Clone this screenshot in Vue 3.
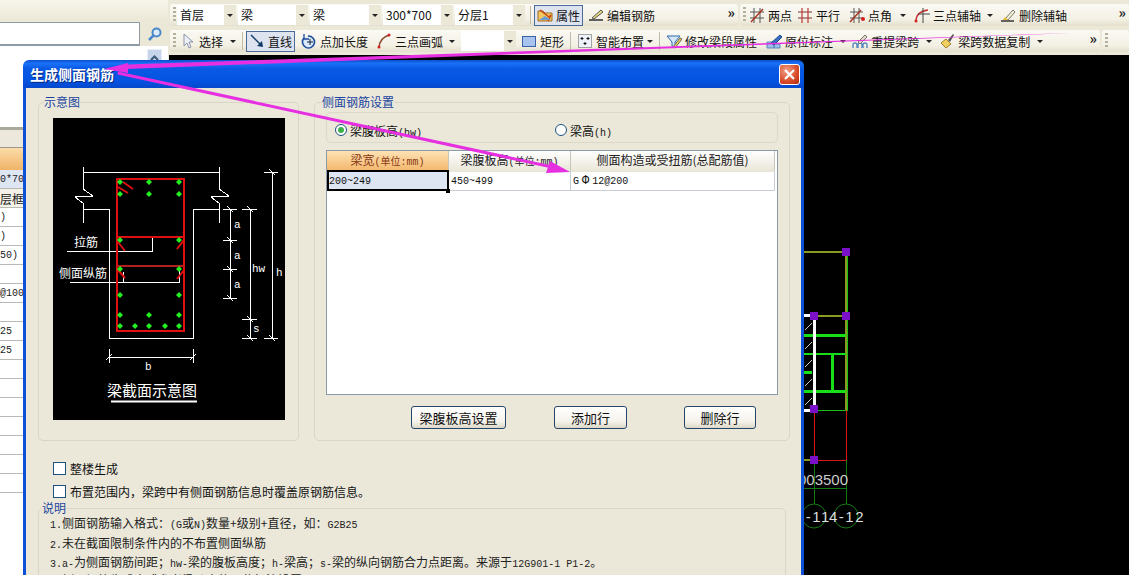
<script setup>
const icons = {
  select: '<path d="M4 1v12l3-3 2 5 2-1-2-5h4z" fill="#eef0f8" stroke="#8a94a8"/>',
  attr: '<path d="M1 4h5l2 2h7v8H1z" fill="#f4c860" stroke="#a06a20"/><path d="M3 3l9 7 2-2-3 6" fill="none" stroke="#c84818" stroke-width="1.5"/><path d="M2 13l6-4 6 4z" fill="#6a9ad0"/>',
  edit: '<path d="M1 13h14" stroke="#222" stroke-width="1.4"/><path d="M4 11l9-8 2 2-9 7z" fill="#e8d880" stroke="#555"/>',
  two: '<path d="M1 5h14M1 11h14M5 1v15M11 1v15" stroke="#555" fill="none"/><path d="M2 15L14 2" stroke="#a83020" stroke-width="1.4"/>',
  para: '<path d="M1 5h14M1 11h14" stroke="#7a3030" fill="none" stroke-width="1.2"/><path d="M5 1v15M11 1v15" stroke="#c03838" fill="none" stroke-width="1.2"/>',
  angle: '<path d="M1 5h13M1 11h13M5 1v15M10 1v15" stroke="#555" fill="none"/><path d="M1 15L12 3" stroke="#a83020" stroke-width="1.4"/><circle cx="14" cy="12" r="2" fill="#d82020"/>',
  arc3: '<path d="M2 14C2 7 6 4 14 3" stroke="#c83030" fill="none" stroke-width="1.3"/><path d="M9 1v15M4 7h12" stroke="#444" fill="none"/><circle cx="2" cy="14" r="1.5" fill="#d82020"/>',
  del: '<path d="M1 14h13" stroke="#333" stroke-width="1.5"/><path d="M5 12l8-9 2 2-7 8z" fill="#f4f0d0" stroke="#777"/><path d="M3 13l2-3 3 3z" fill="#e8b830"/>',
  line: '<path d="M2 2l11 11" stroke="#123a68" stroke-width="1.5"/><path d="M14 14l-6-1 5-5z" fill="#123a68"/>',
  len: '<path d="M3 5a6 6 0 1 0 4-2" fill="#dbe8fa" stroke="#1c4c9c" stroke-width="1.6"/><path d="M3 1v5h5" fill="none" stroke="#1c4c9c" stroke-width="1.3"/><path d="M6 9h6M9 6v6" stroke="#123" />',
  arc: '<path d="M3 15C3 8 7 4 13 2" stroke="#8a4a30" fill="none" stroke-width="1.6"/><circle cx="3" cy="14" r="1.5" fill="#d02020"/><circle cx="13" cy="2" r="1.5" fill="#d02020"/>',
  rect: '<rect x="1.5" y="3.5" width="13" height="10" fill="#a8c4ee" stroke="#3a62a8"/>',
  smart: '<rect x="1.5" y="1.5" width="13" height="13" fill="#eef2fa" stroke="#555" stroke-dasharray="1 1"/><path d="M5 4v3M3.5 5.500h3M11 4v3M9.500 5.500h3M8 9v3M6.500 10.500h3" stroke="#111"/>',
  fix: '<path d="M1 3h13l-5 6v5l-3-1V9z" fill="#d6e6f8" stroke="#2a6aae"/><path d="M7 14l7-9 2 1-7 9z" fill="#e8d060" stroke="#665"/>',
  mark: '<path d="M1 9h7v6H1zM8 11h6v4H8z" fill="#9cc0e8" stroke="#5a88c0"/><path d="M5 10l9-8 2 2-8 8z" fill="#3a70c0" stroke="#1c4c90"/>',
  lift: '<path d="M1 15v-3a2 2 0 0 1 4 0v3M6 15v-3a2 2 0 0 1 4 0v3M11 15v-3a2 2 0 0 1 4 0v3" fill="none" stroke="#5a88c0" stroke-width="1.4"/><path d="M6 9l7-7 2 2-7 7z" fill="#e0d8c0" stroke="#777"/>',
  copy: '<path d="M2 10l5-4 5 5-5 4z" fill="#f0d060" stroke="#a08020"/><path d="M9 7l5-6 1 1-4 7z" fill="#555"/>'
}

const row1 = [
  { t: '属性', i: 'attr', ml: 0, on: true },
  { t: '编辑钢筋', i: 'edit', ml: 2 }
]
const row1b = [
  { t: '两点', i: 'two', ml: 0 },
  { t: '平行', i: 'para', ml: -1 },
  { t: '点角', i: 'angle', ml: 3, caret: 8 },
  { t: '三点辅轴', i: 'arc3', ml: 2, caret: 6 },
  { t: '删除辅轴', i: 'del', ml: 1 }
]
const combos = [
  { t: '首层', w: 59 },
  { t: '梁', w: 70 },
  { t: '梁', w: 71 },
  { t: '300*700', w: 70 },
  { t: '分层1', w: 70 }
]
const row2a = [
  { t: '选择', i: 'select', ml: 0, caret: 7 }
]
const row2b = [
  { t: '直线', i: 'line', ml: 0, on: true },
  { t: '点加长度', i: 'len', ml: 3 },
  { t: '三点画弧', i: 'arc', ml: 2, caret: 6 }
]
const row2c = [
  { t: '矩形', i: 'rect', ml: 2 }
]
const row2d = [
  { t: '智能布置', i: 'smart', ml: 0, caret: 3 }
]
const row2e = [
  { t: '修改梁段属性', i: 'fix', ml: 0 },
  { t: '原位标注', i: 'mark', ml: 3, caret: 7 },
  { t: '重提梁跨', i: 'lift', ml: 0, caret: 7 },
  { t: '梁跨数据复制', i: 'copy', ml: 1, caret: 7 }
]

const sideRows = [
  { t: '300*700', cls: 'blue' },
  { t: '楼层框架梁', cls: 'cream cn' },
  { t: '(0)' },
  { t: '(0)' },
  { t: '(150)' },
  { t: '' },
  { t: 'Φ8@100' },
  { t: '' },
  { t: '2Φ25' },
  { t: '2Φ25' },
  { t: '' }, { t: '' }, { t: '' }, { t: '' }, { t: '' }, { t: '' }, { t: '' }
]

const dots = [
  [120, 182], [149, 182], [179, 182],
  [120, 194], [149, 194], [179, 194],
  [120, 240], [179, 240],
  [120, 269], [179, 269],
  [120, 295], [179, 295],
  [120, 315], [149, 315], [179, 315],
  [120, 326], [135, 326], [149, 326], [165, 326], [179, 326]
]
function dot(p) {
  const [x, y] = p
  return `${x},${y - 3} ${x + 3},${y} ${x},${y + 3} ${x - 3},${y}`
}
const ticks = [
  [230, 209], [230, 240], [230, 269], [230, 298],
  [250, 209], [250, 319], [250, 338],
  [272, 172], [272, 338]
]
const nodes = [[846, 252], [846, 316], [814, 316], [814, 409], [814, 460]]
</script>

<template>
  <div class="screen">
    <div class="side">
      <div class="side-head"></div>
      <div class="search">
        <div class="search-input"></div>
        <div class="search-btn">
          <svg width="16" height="16" viewBox="0 0 16 16">
            <circle cx="9.500" cy="6.500" r="4" fill="#dcebfa" stroke="#4a88c8" stroke-width="2" />
            <path d="M6.500 9.500L2 14" stroke="#4a88c8" stroke-width="2.500" />
          </svg>
        </div>
      </div>
      <div class="side-top">
        <div class="scroll-up">
          <svg width="13" height="11" viewBox="0 0 13 11"><path d="M3 7l3.500-3.500L10 7" fill="none" stroke="#3a5a7a" stroke-width="2" /></svg>
        </div>
      </div>
      <div class="side-band"></div>
      <div class="side-orange"></div>
      <div v-for="(r, n) in sideRows" :key="n" class="side-row" :class="r.cls">{{ r.t }}</div>
    </div>

    <div class="main">
      <div class="tool-row first">
        <div class="bar bar-a">
          <i class="grip"></i>
          <div v-for="c in combos" :key="c.t + c.w" class="combo" :style="{ width: c.w + 'px' }">
            <span class="combo-text">{{ c.t }}</span>
            <span class="combo-arrow"><i class="caret"></i></span>
          </div>
          <i class="sep"></i>
          <div v-for="b in row1" :key="b.t" class="tool" :class="{ on: b.on }" :style="{ marginLeft: b.ml + 'px' }">
            <svg width="16" height="16" viewBox="0 0 16 16" v-html="icons[b.i]"></svg>
            <span>{{ b.t }}</span>
          </div>
          <span class="more">»</span>
        </div>
        <div class="bar bar-b">
          <i class="grip"></i>
          <div v-for="b in row1b" :key="b.t" class="tool" :style="{ marginLeft: b.ml + 'px' }">
            <svg width="16" height="16" viewBox="0 0 16 16" v-html="icons[b.i]"></svg>
            <span>{{ b.t }}</span>
            <i v-if="b.caret" class="caret" :style="{ marginLeft: b.caret - 3 + 'px' }"></i>
          </div>
          <span class="more">»</span>
        </div>
      </div>

      <div class="tool-row second">
        <div class="bar bar-c">
          <i class="grip"></i>
          <div v-for="b in row2a" :key="b.t" class="tool">
            <svg width="16" height="16" viewBox="0 0 16 16" v-html="icons[b.i]"></svg>
            <span>{{ b.t }}</span>
            <i class="caret" :style="{ marginLeft: b.caret - 3 + 'px' }"></i>
          </div>
          <i class="sep"></i>
          <div v-for="b in row2b" :key="b.t" class="tool" :class="{ on: b.on }" :style="{ marginLeft: b.ml + 'px' }">
            <svg width="16" height="16" viewBox="0 0 16 16" v-html="icons[b.i]"></svg>
            <span>{{ b.t }}</span>
            <i v-if="b.caret" class="caret" :style="{ marginLeft: b.caret - 3 + 'px' }"></i>
          </div>
          <div class="combo blank">
            <span class="combo-text"></span>
            <span class="combo-arrow"><i class="caret"></i></span>
          </div>
          <div v-for="b in row2c" :key="b.t" class="tool" :style="{ marginLeft: b.ml + 'px' }">
            <svg width="16" height="16" viewBox="0 0 16 16" v-html="icons[b.i]"></svg>
            <span>{{ b.t }}</span>
          </div>
          <i class="sep"></i>
          <div v-for="b in row2d" :key="b.t" class="tool">
            <svg width="16" height="16" viewBox="0 0 16 16" v-html="icons[b.i]"></svg>
            <span>{{ b.t }}</span>
            <i class="caret" :style="{ marginLeft: b.caret - 3 + 'px' }"></i>
          </div>
          <i class="sep"></i>
          <div v-for="b in row2e" :key="b.t" class="tool" :style="{ marginLeft: b.ml + 'px' }">
            <svg width="16" height="16" viewBox="0 0 16 16" v-html="icons[b.i]"></svg>
            <span>{{ b.t }}</span>
            <i v-if="b.caret" class="caret" :style="{ marginLeft: b.caret - 3 + 'px' }"></i>
          </div>
          <span class="more">»</span>
        </div>
        <div class="bar bar-d"><i class="grip"></i></div>
      </div>

      <div class="canvas">
        <svg class="cad" width="960" height="520" viewBox="169 55 960 520">
          <g fill="none" shape-rendering="crispEdges">
            <path d="M804 252H846V410" stroke="#8a9a20" stroke-width="2" />
            <path d="M847 252V410H804" stroke="#18c018" />
            <path d="M804 316H846" stroke="#8a9a20" stroke-width="2" />
            <path d="M804 335H846M804 391H846M832 354V391" stroke="#18e018" stroke-width="3" />
            <path d="M804 354H846" stroke="#18e018" stroke-width="2" />
            <path d="M804 372H812" stroke="#18e018" stroke-width="3" />
            <path d="M813 320V410" stroke="#b0a030" />
            <path d="M804 315H814V410H804" stroke="#fff" stroke-width="3" />
            <path d="M814 410V460H846V410" stroke="#d81818" />
            <path d="M804 460H814" stroke="#8a9a20" stroke-width="2" />
            <path d="M814 460V504M846 460V504" stroke="#127a12" />
            <path d="M804 488H847" stroke="#127a12" />
          </g>
          <g fill="none">
            <path d="M805 330L812 323M805 349L812 342M805 367L812 360M805 386L812 379M805 405L812 398" stroke="#ccc" />
            <circle cx="814" cy="516" r="12" stroke="#127a12" />
            <circle cx="846" cy="516" r="12" stroke="#127a12" />
          </g>
          <rect v-for="(n, k) in nodes" :key="k" :x="n[0] - 4" :y="n[1] - 4" width="8" height="8" fill="#7a10c8" />
          <text x="798" y="485" class="cad-text">003500</text>
          <text x="796" y="522" class="cad-text label">4-11</text>
          <text x="829" y="522" class="cad-text label">4-12</text>
        </svg>
      </div>
    </div>

    <div class="dialog">
      <div class="title">
        <span class="title-text">生成侧面钢筋</span>
        <div class="close">
          <svg width="13" height="13" viewBox="0 0 13 13"><path d="M2 2l9 9M11 2l-9 9" stroke="#fff" stroke-width="2.200" /></svg>
        </div>
      </div>
      <div class="body">
        <div class="groups">
          <fieldset class="group left">
            <legend class="legend-left">示意图</legend>
            <svg class="sketch" width="232" height="302" viewBox="53 118 232 302">
              <g fill="none" stroke="#fff" shape-rendering="crispEdges">
                <path d="M83 172H219" />
                <path d="M83 167V189L93 196L75 197L83 203V223" />
                <path d="M219 167V189L229 196L211 197L219 203V223" />
                <path d="M83 209H109V338H193V209H220" />
                <path d="M67 251H152V237" />
                <path d="M70 282H179V270M123 272V282" />
                <path d="M230 209V298M250 209V338M272 172V338" />
                <path d="M223 209H237M223 240H237M223 269H237M223 298H237" />
                <path d="M242 209H257M242 319H257M242 338H257M264 172H278M264 338H278" />
                <path d="M109 357H193M109 349V363M193 349V363" />
                <path v-for="(t, k) in ticks" :key="k" :d="`M${t[0] - 3} ${t[1] - 3}L${t[0] + 3} ${t[1] + 3}`" />
                <path d="M106 360L112 354M190 360L196 354" />
              </g>
              <g fill="none" stroke="#e01010" stroke-width="2">
                <rect x="117" y="179" width="67" height="152" />
                <path d="M117 237H184" />
                <path d="M123 182L133 189M118 187L128 193M118 242L125 251M184 240L177 249M118 270L125 278M184 270L177 279" />
              </g>
              <path d="M117 266H184" stroke="#b02020" stroke-width="2" />
              <polygon v-for="(p, k) in dots" :key="k" :points="dot(p)" fill="#22f022" />
              <text x="74" y="247" class="sk-cn">拉筋</text>
              <text x="59" y="278" class="sk-cn">侧面纵筋</text>
              <text x="234" y="228" class="sk-en">a</text>
              <text x="234" y="259" class="sk-en">a</text>
              <text x="234" y="288" class="sk-en">a</text>
              <text x="252" y="272" class="sk-en">hw</text>
              <text x="253" y="332" class="sk-en">s</text>
              <text x="276" y="276" class="sk-en">h</text>
              <text x="145" y="370" class="sk-en">b</text>
              <text x="107" y="396" class="sk-title">梁截面示意图</text>
              <path d="M111 401.500H197" stroke="#fff" stroke-width="2" />
            </svg>
          </fieldset>

          <fieldset class="group right">
            <legend class="legend-right">侧面钢筋设置</legend>
            <div class="radios">
              <label class="radio wide"><i class="dot checked"></i><span>梁腹板高<span class="en">(hw)</span></span></label>
              <label class="radio"><i class="dot"></i><span>梁高<span class="en">(h)</span></span></label>
            </div>
            <div class="table">
              <div class="thead">
                <div class="th active">梁宽<span class="en">(单位:mm)</span></div>
                <div class="th">梁腹板高<span class="en">(单位:mm)</span></div>
                <div class="th">侧面构造或受扭筋(总配筋值)</div>
              </div>
              <div class="trow">
                <div class="td current"><span class="en">200~249</span><i class="handle"></i></div>
                <div class="td"><span class="en">450~499</span></div>
                <div class="td"><span class="en">G<span class="sym">Φ</span>12@200</span></div>
              </div>
            </div>
            <div class="actions">
              <button class="btn b1">梁腹板高设置</button>
              <button class="btn b2">添加行</button>
              <button class="btn b3">删除行</button>
            </div>
          </fieldset>
        </div>

        <div class="check first-check"><i class="box"></i><span>整楼生成</span></div>
        <div class="check"><i class="box"></i><span>布置范围内，梁跨中有侧面钢筋信息时覆盖原钢筋信息。</span></div>

        <fieldset class="notes">
          <legend>说明</legend>
          <p><span class="en">1.</span>侧面钢筋输入格式：<span class="en">(G</span>或<span class="en">N)</span>数量+级别+直径，如：<span class="en">G2B25</span></p>
          <p><span class="en">2.</span>未在截面限制条件内的不布置侧面纵筋</p>
          <p><span class="en">3.a-</span>为侧面钢筋间距；<span class="en">hw-</span>梁的腹板高度；<span class="en">h-</span>梁高；<span class="en">s-</span>梁的纵向钢筋合力点距离。来源于<span class="en">12G901-1 P1-2</span>。</p>
          <p class="last"><span class="en">4.</span>侧面钢筋生成方式参考梁跨内的原位标注设置</p>
        </fieldset>
      </div>
    </div>

    <svg class="arrows" width="1129" height="575" viewBox="0 0 1129 575">
      <polygon points="1072,33 126,64.500 126,69" fill="#e62fe0" />
      <polygon points="104,69 128,63 128,73" fill="#e62fe0" />
      <polygon points="118,71.500 550,165 549.500,168 117.500,74.500" fill="#e62fe0" />
      <polygon points="570,172 550,161 546,173" fill="#e62fe0" />
    </svg>
  </div>
</template>

<style>
html, body {
  margin: 0;
  background: #000;
}
</style>

<style scoped>
.screen {
  position: relative;
  display: flex;
  width: 1129px;
  height: 575px;
  overflow: hidden;
  background: #000;
  font-family: "Noto Sans CJK SC", "Liberation Sans", sans-serif;
  font-size: 12px;
  color: #111;
}

.en {
  font-family: "Liberation Mono", "Noto Sans CJK SC", monospace;
  font-size: 10px;
}

.sym {
  margin: 0 3px;
  font-size: 12px;
}

/* left panel */
.side {
  width: 168px;
  flex-shrink: 0;
  background: #fff;
  overflow: hidden;
}

.side-head {
  height: 22px;
  background: linear-gradient(#f8f5ec, #ebe7d6);
}

.search {
  display: flex;
  height: 24px;
  background: #ece8d8;
}

.search-input {
  width: 140px;
  box-sizing: border-box;
  background: #fff;
  border: 1px solid #8c9ba6;
  border-left: 0;
  border-bottom-width: 2px;
}

.search-btn {
  display: flex;
  align-items: center;
  padding-left: 7px;
}

.side-top {
  height: 79px;
  display: flex;
  justify-content: flex-end;
  padding-right: 6px;
  box-sizing: border-box;
}

.scroll-up {
  width: 13px;
  height: 11px;
  margin-top: 3px;
  background: #c6d4ec;
  border: 1px solid #e8eef8;
}

.side-band {
  height: 23px;
  box-sizing: border-box;
  background: #ece9dc;
  border-top: 2px solid #fff;
  border-bottom: 1px solid #9a9a90;
  box-shadow: inset 0 3px 0 #a8a89c;
}

.side-orange {
  height: 22px;
  background: linear-gradient(#fbdca8, #f0b468);
}

.side-row {
  height: 19px;
  box-sizing: border-box;
  margin-left: -12px;
  padding-top: 1px;
  font-family: "Liberation Mono", "Noto Sans CJK SC", monospace;
  font-size: 10px;
  line-height: 18px;
  white-space: nowrap;
  border-bottom: 1px solid #b9b9b4;
  color: #222;
}

.side-row.cn {
  font-family: "Noto Sans CJK SC", sans-serif;
  font-size: 12px;
}

.side-row.blue {
  background: #dfe6f3;
}

.side-row.cream {
  background: #f4f2e8;
}

/* toolbars */
.main {
  flex: 1;
  display: flex;
  flex-direction: column;
  min-width: 0;
  background: #ece8d8;
}

.tool-row {
  display: flex;
  height: 25px;
  padding-left: 2px;
  background: #ece8d8;
  flex-shrink: 0;
}

.tool-row.first {
  height: 26px;
  padding-top: 4px;
  box-sizing: border-box;
  margin-bottom: 4px;
}

.bar {
  display: flex;
  align-items: center;
  height: 22px;
  padding-left: 3px;
  background: linear-gradient(#fbfaf4, #f3f0e4 70%, #e4e0ce);
  border-radius: 3px;
  box-sizing: border-box;
}

.bar-a {
  width: 568px;
}

.bar-b {
  flex: 1;
  margin-left: 2px;
}

.bar-c {
  width: 930px;
}

.bar-d {
  flex: 1;
  margin-left: 2px;
}

.grip {
  width: 3px;
  height: 16px;
  margin-right: 1px;
  flex-shrink: 0;
  background: repeating-linear-gradient(#b4b09e 0 2px, transparent 2px 4px);
}

.bar-b .grip {
  margin: 0;
}

.combo {
  display: flex;
  height: 20px;
  margin-right: 2px;
  flex-shrink: 0;
}

.combo-text {
  flex: 1;
  padding-left: 3px;
  line-height: 19px;
  background: #fff;
  white-space: nowrap;
  overflow: hidden;
}

.combo-arrow {
  width: 12px;
  display: flex;
  align-items: center;
  justify-content: center;
  background: #ece8d8;
}

.combo.blank {
  width: 55px;
  margin: 0 0 0 3px;
}

.caret {
  display: block;
  width: 0;
  height: 0;
  flex-shrink: 0;
  border-left: 3px solid transparent;
  border-right: 3px solid transparent;
  border-top: 3px solid #222;
}

.sep {
  width: 1px;
  height: 18px;
  margin: 0 3px 0 3px;
  flex-shrink: 0;
  background: #c0bcaa;
}

.tool {
  display: flex;
  align-items: center;
  gap: 3px;
  height: 21px;
  padding: 0 3px;
  box-sizing: border-box;
  white-space: nowrap;
  flex-shrink: 0;
}

.tool.on {
  background: #dde4f0;
  outline: 1px solid #4a6a9a;
  outline-offset: -1px;
}

.tool svg {
  flex-shrink: 0;
}

.more {
  margin-left: auto;
  margin-right: 3px;
  font-size: 14px;
  font-weight: 700;
  line-height: 16px;
  align-self: flex-start;
  color: #222;
}

/* drawing area */
.canvas {
  flex: 1;
  margin-left: 1px;
  background: #000;
  overflow: hidden;
}

.cad {
  display: block;
}

.cad-text {
  font-family: "Liberation Sans", sans-serif;
  font-size: 15px;
  fill: #ccc;
}

.cad-text.label {
  letter-spacing: 1.5px;
  fill: #ddd;
}

/* dialog */
.dialog {
  position: absolute;
  left: 23px;
  top: 60px;
  width: 781px;
  height: 540px;
  display: flex;
  flex-direction: column;
}

.title {
  display: flex;
  align-items: center;
  justify-content: space-between;
  height: 28px;
  flex-shrink: 0;
  padding: 0 4px 0 7px;
  border-radius: 6px 6px 0 0;
  background: linear-gradient(#0a4ed0, #1a72f6 12%, #0a5ae6 30%, #0452e0 75%, #0548cc);
}

.title-text {
  font-size: 14px;
  font-weight: 700;
  color: #fff;
  text-shadow: 1px 1px 0 #0a2a80;
}

.close {
  display: flex;
  align-items: center;
  justify-content: center;
  width: 21px;
  height: 21px;
  box-sizing: border-box;
  border: 1px solid #fff;
  border-radius: 3px;
  background: radial-gradient(circle at 35% 30%, #f0a088, #d84a28 60%, #b02810);
}

.body {
  flex: 1;
  padding: 7px 11px 0 12px;
  background: #ebe8da;
  border-left: 3px solid #0c50d8;
  border-right: 3px solid #0c50d8;
  overflow: hidden;
}

.groups {
  display: flex;
  gap: 15px;
}

fieldset {
  margin: 0;
  padding: 0;
  min-width: 0;
  box-sizing: border-box;
  border: 1px solid #d9d6c6;
  border-radius: 5px;
}

legend {
  padding: 0;
  line-height: 14px;
  color: #1a44a0;
}

.group {
  height: 346px;
  flex-shrink: 0;
}

.group.left {
  width: 261px;
}

.legend-left {
  margin-left: 5px;
}

.sketch {
  display: block;
  margin: 9px 0 0 14px;
  background: #000;
}

.sk-cn {
  font-size: 12px;
  fill: #fff;
}

.sk-en {
  font-family: "Liberation Mono", monospace;
  font-size: 11px;
  fill: #fff;
}

.sk-title {
  font-size: 15px;
  fill: #fff;
}

.group.right {
  width: 476px;
}

.legend-right {
  margin-left: 7px;
}

.radios {
  display: flex;
  height: 31px;
  margin: 3px 11px 0;
  padding-left: 8px;
  box-sizing: border-box;
  border: 1px solid #dcd9c8;
  border-radius: 5px;
  align-items: center;
}

.radio {
  display: flex;
  align-items: center;
  gap: 3px;
  margin-top: 5px;
}

.radio.wide {
  width: 220px;
}

.dot {
  display: flex;
  width: 12px;
  height: 12px;
  box-sizing: border-box;
  align-items: center;
  justify-content: center;
  background: #fff;
  border: 1px solid #1c5180;
  border-radius: 50%;
}

.dot.checked::after {
  content: "";
  width: 6px;
  height: 6px;
  border-radius: 50%;
  background: #3cb048;
}

.table {
  height: 245px;
  margin: 7px 11px 0;
  box-sizing: border-box;
  background: #fff;
  border: 1px solid #8a9aa8;
  overflow: hidden;
}

.thead,
.trow {
  display: grid;
  grid-template-columns: 122px 122px 204px;
}

.thead {
  height: 19px;
}

.th {
  text-align: center;
  line-height: 18px;
  white-space: nowrap;
  background: linear-gradient(#fff, #e8e4d6);
  border-right: 1px solid #c8c6b8;
  color: #222;
}

.th.active {
  background: linear-gradient(#fde2b4, #f2b468);
  color: #8a3a14;
}

.trow {
  height: 20px;
  border-bottom: 1px solid #c8ccd4;
  width: 448px;
}

.td {
  position: relative;
  padding-left: 2px;
  line-height: 18px;
  border-right: 1px solid #c8ccd4;
}

.td.current {
  background: #dde5f2;
  padding-left: 2px;
  outline: 2px solid #000;
  outline-offset: -2px;
}

.handle {
  position: absolute;
  right: -2px;
  bottom: -2px;
  width: 4px;
  height: 4px;
  background: #000;
}

.actions {
  display: flex;
  margin: 11px 0 0 96px;
}

.btn {
  height: 23px;
  padding: 0;
  font-family: inherit;
  font-size: 13px;
  line-height: 20px;
  color: #111;
  background: linear-gradient(#fff, #f4f2ea 70%, #dcd8c8);
  border: 1px solid #23466a;
  border-radius: 3px;
}

.b1 {
  width: 95px;
}

.b2 {
  width: 73px;
  margin-left: 48px;
}

.b3 {
  width: 72px;
  margin-left: 57px;
}

.check {
  display: flex;
  align-items: center;
  gap: 4px;
  height: 13px;
  margin: 10px 0 0 15px;
  line-height: 13px;
  white-space: nowrap;
}

.first-check {
  margin-top: 21px;
}

.box {
  width: 13px;
  height: 13px;
  box-sizing: border-box;
  background: #fff;
  border: 1px solid #1c5180;
}

.notes {
  width: 748px;
  margin-top: 3px;
  padding: 0 0 0 11px;
}

.notes legend {
  margin-left: -8px;
  margin-bottom: -2px;
}

.notes p {
  margin: 0;
  height: 19.500px;
  line-height: 19px;
  white-space: nowrap;
  color: #222;
}

.notes p.last {
  margin-top: -2px;
}

.arrows {
  position: absolute;
  left: 0;
  top: 0;
  pointer-events: none;
}
</style>
